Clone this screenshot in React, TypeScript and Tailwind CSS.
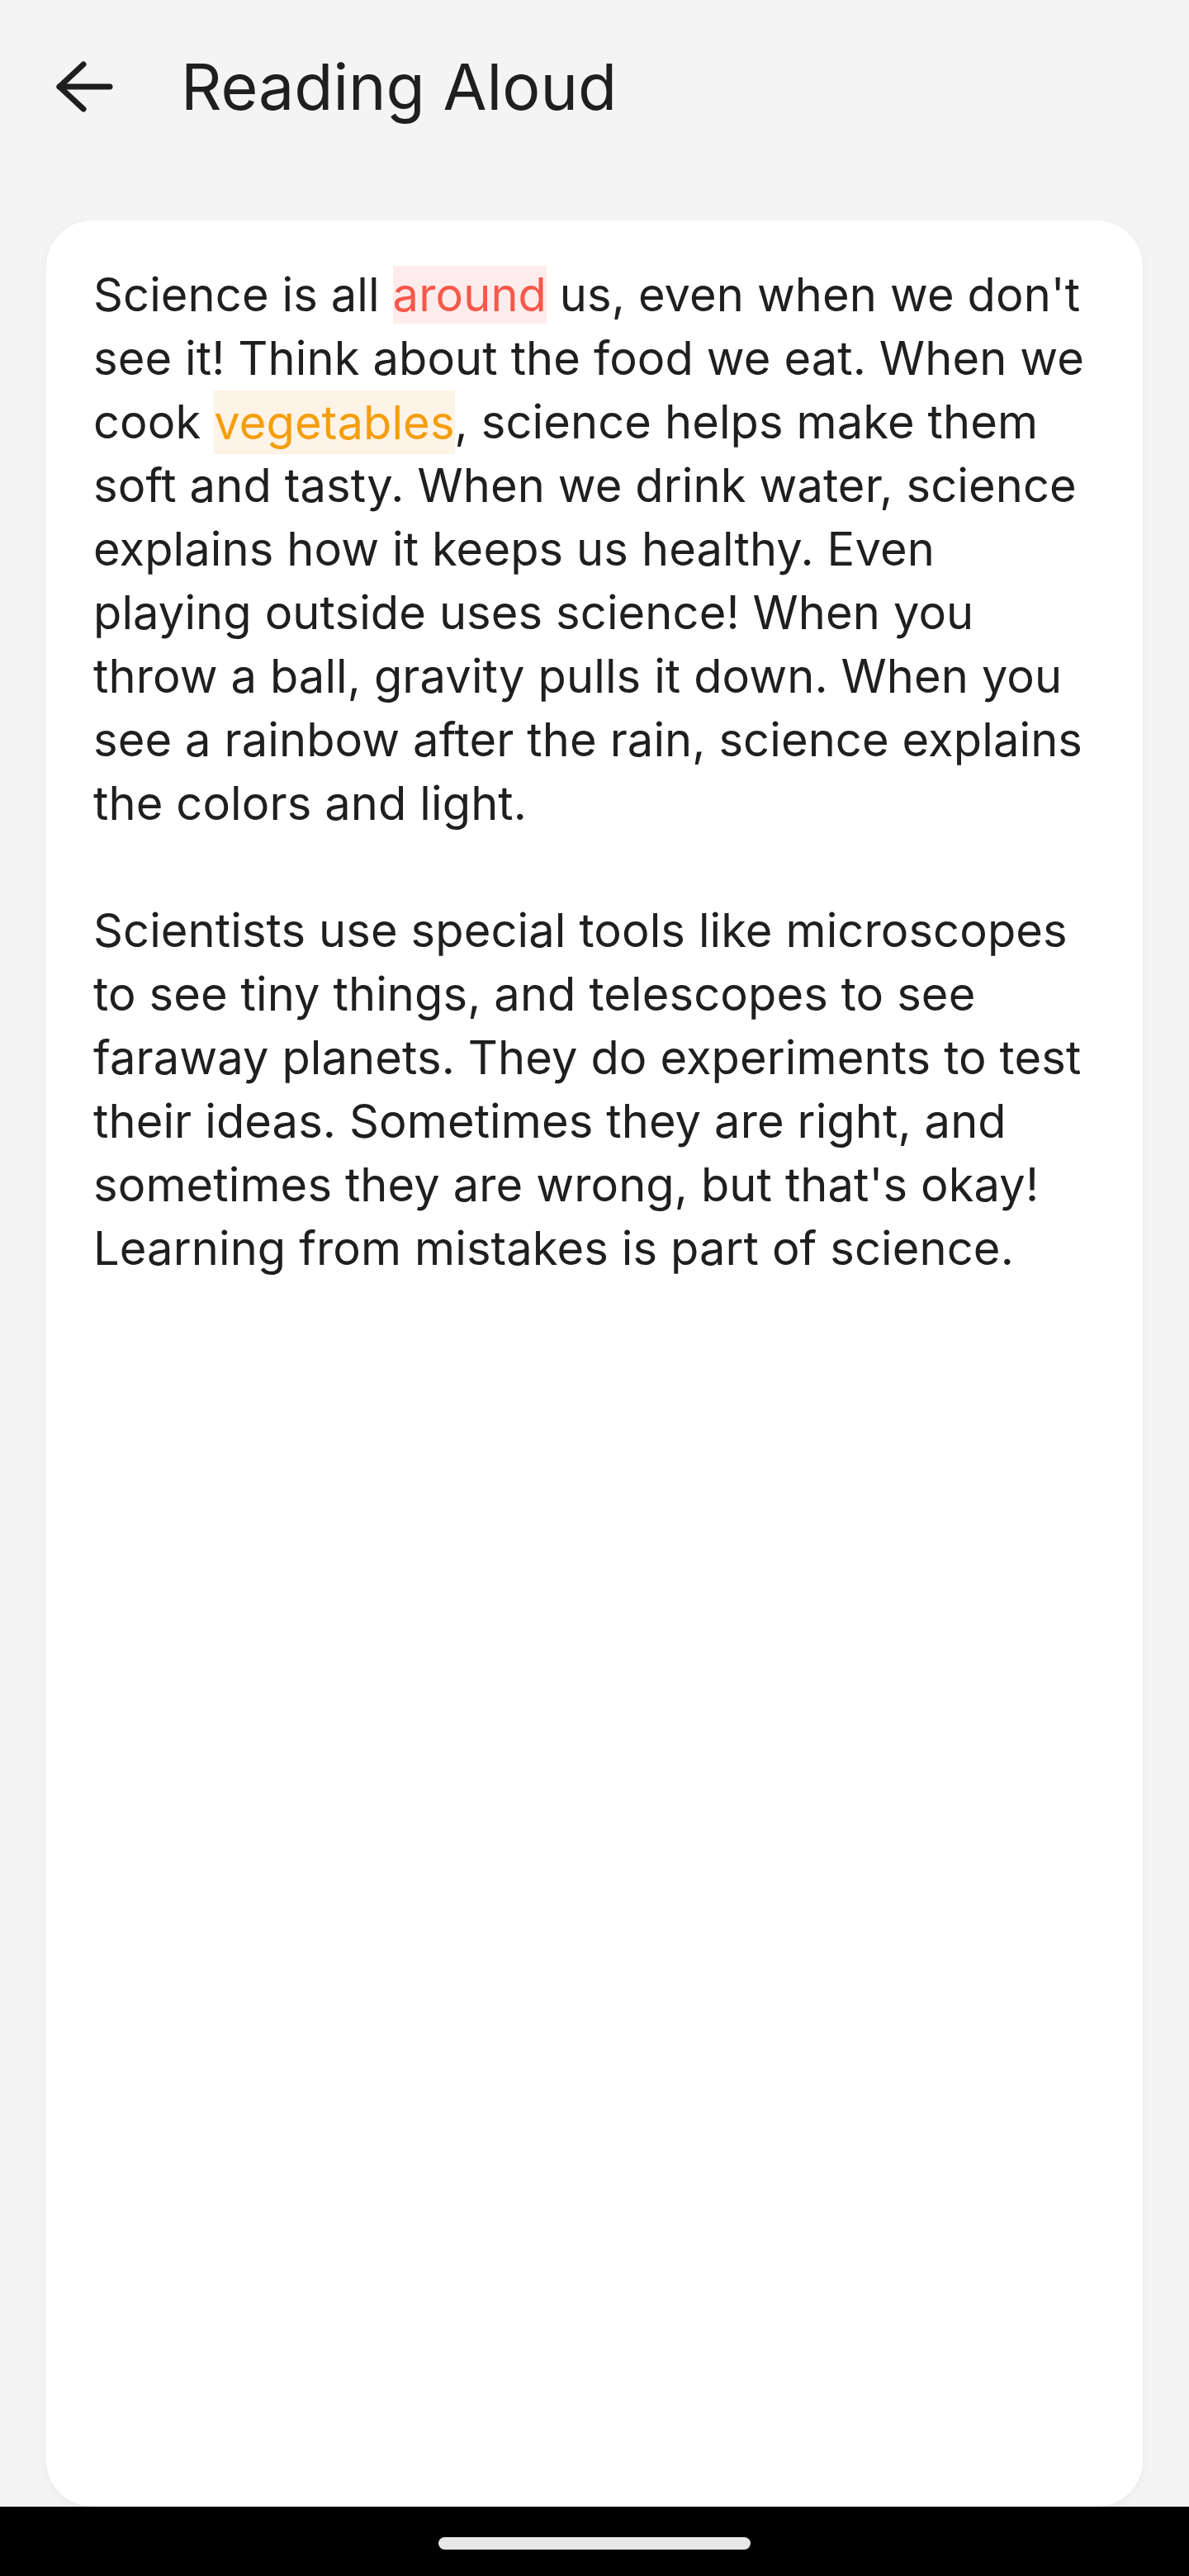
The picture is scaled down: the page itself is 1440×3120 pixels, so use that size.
import React from "react";

export default function App() {
  return (
    <div
      className="flex h-[3120px] w-[1440px] flex-col bg-[#f4f4f4] text-[#1f1f1f]"
      style={{ fontFamily: "Inter, 'Noto Sans', sans-serif" }}
    >
      <header className="flex h-[210px] shrink-0 items-center">
        <svg
          className="ml-[66px]"
          width="72"
          height="64"
          viewBox="0 0 72 64"
          fill="none"
          stroke="#1f1f1f"
          strokeWidth="7"
          strokeLinecap="round"
          strokeLinejoin="round"
        >
          <path d="M6 32H67" />
          <path d="M35 5L6 32L35 59" />
        </svg>
        <h1 className="ml-[81px] text-[77px] leading-none font-normal">
          Reading Aloud
        </h1>
      </header>

      <main className="mx-[56px] mt-[57px] flex-1 rounded-[56px] bg-white px-[57px] pt-[52px] shadow-[0_2px_10px_rgba(0,0,0,0.05)]">
        <div className="text-[56px] leading-[77px] font-normal tracking-[0.12px]">
          <p>
            Science is all{" "}
            <span className="bg-[#fdeceb] py-[1px] text-[#f6584a]">around</span> us, even
            when we don't see it! Think about the food we eat. When we cook{" "}
            <span className="bg-[#fdf3e6] py-[4.5px] text-[#f49e0c]">vegetables</span>,
            science helps make them soft and tasty. When we drink water, science
            explains how it keeps us healthy. Even playing outside uses science!
            When you throw a ball, gravity pulls it down. When you see a rainbow
            after the rain, science explains the colors and light.
          </p>
          <p className="mt-[77px]">
            Scientists use special tools like microscopes to see tiny things, and
            telescopes to see faraway planets. They do experiments to test their
            ideas. Sometimes they are right, and sometimes they are wrong, but
            that's okay! Learning from mistakes is part of science.
          </p>
        </div>
      </main>

      <div className="flex h-[84px] shrink-0 items-center justify-center bg-black">
        <div className="mt-[4px] h-[15px] w-[378px] rounded-full bg-[#e8e8e8]" />
      </div>
    </div>
  );
}
